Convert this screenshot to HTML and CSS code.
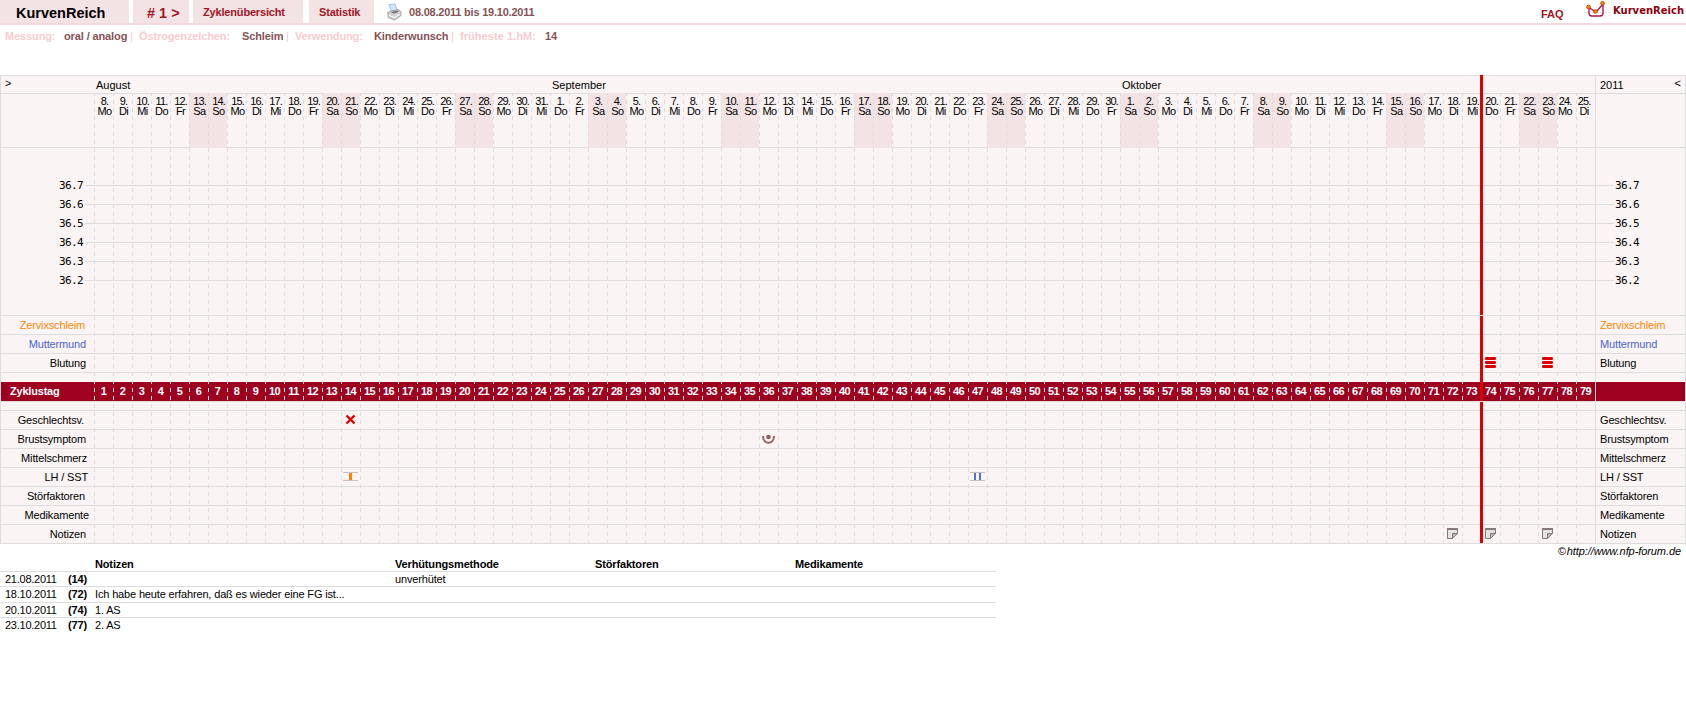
FILE: index.html
```html
<!DOCTYPE html>
<html lang="de">
<head>
    <meta charset="UTF-8">
    <title>KurvenReich - Zyklus 1</title>
    <link rel="stylesheet" href="styles.css">
</head>
<body>
    <header class="topbar">
        <div class="tab tab-title"><span>KurvenReich</span></div>
        <a class="tab tab-cycle"><span># 1 &gt;</span></a>
        <a class="tab tab-overview"><span>Zyklenübersicht</span></a>
        <a class="tab tab-stats"><span>Statistik</span></a>
        <svg class="printer" width="16" height="18" viewBox="0 0 16 18">
            <path d="M2 1.500l6-.5 2.500 7-6 1z" fill="#d4e6fb" stroke="#8fb4e0" stroke-width=".8"/>
            <path d="M.7 9.500l3.300-1.500 7-1.500 3 2v4l-6.500 4.500-6.300-2.500z" fill="#d2d2d2" stroke="#888" stroke-width=".7"/>
            <path d="M4 9l6-1.500 2 1.200-5.500 2z" fill="#777"/>
            <path d="M2 12.500l5.500 2 5.500-3.500" fill="none" stroke="#fff"/>
        </svg>
        <span class="period">08.08.2011 bis 19.10.2011</span>
        <a class="faq">FAQ</a>
        <svg class="logo" width="28" height="20" viewBox="0 0 28 20">
            <path d="M0 12.500h28M6.500 15v4M12.500 15v4M18.500 15v4" stroke="#e4e4e4" stroke-dasharray="3 1"/>
            <path d="M5 7v6q0 3 3 3h8q3 0 3-3V4l-7 8-8-5" fill="none" stroke="#b01848" stroke-width="1.400"/>
            <circle cx="4.500" cy="7" r="1.800" fill="#ff9000" stroke="#c04010"/>
            <circle cx="11.500" cy="11.500" r="1.800" fill="#ff9000" stroke="#c04010"/>
            <circle cx="18.500" cy="3.300" r="1.800" fill="#ff9000" stroke="#c04010"/>
        </svg>
        <span class="brand">KurvenReich</span>
    </header>

    <div class="settings">
        <span>Messung:</span><b>oral / analog</b><i>|</i>
        <span>Östrogenzeichen:</span><b>Schleim</b><i>|</i>
        <span>Verwendung:</span><b>Kinderwunsch</b><i>|</i>
        <span class="wide">früheste 1.hM:</span><b>14</b>
    </div>

    <main class="chart" id="chart">
        <div class="row months">
            <div class="left">&gt;</div>
            <div class="days">
                <span class="month-aug">August</span>
                <span class="month-sep">September</span>
                <span class="month-okt">Oktober</span>
            </div>
            <div class="right"><span>2011</span><span class="next">&lt;</span></div>
        </div>
        <div class="row dates">
            <div class="left"></div>
            <div class="days" id="dates"></div>
            <div class="right"></div>
        </div>
        <div class="row temps" id="temps"></div>
        <div id="rows-top"></div>
        <div class="row gap"><div class="left"></div><div class="days"></div><div class="right"></div></div>
        <div class="row cycle">
            <div class="left">Zyklustag</div>
            <div class="days" id="cycle-days"></div>
            <div class="right"></div>
        </div>
        <div class="row gap lined"><div class="left"></div><div class="days"></div><div class="right"></div></div>
        <div id="rows-bottom"></div>
        <div class="dashes"></div>
        <div class="today"></div>
    </main>

    <div class="copyright">© http://www.nfp-forum.de</div>

    <div class="notes">
        <div class="note head"><span></span><span></span><b>Notizen</b><b>Verhütungsmethode</b><b>Störfaktoren</b><b>Medikamente</b></div>
        <div class="note"><span class="day">21.08.2011</span><b>(14)</b><span></span><span>unverhütet</span></div>
        <div class="note tall"><span class="day">18.10.2011</span><b>(72)</b><span>Ich habe heute erfahren, daß es wieder eine FG ist...</span></div>
        <div class="note"><span class="day">20.10.2011</span><b>(74)</b><span>1. AS</span></div>
        <div class="note last"><span class="day">23.10.2011</span><b>(77)</b><span>2. AS</span></div>
    </div>

    <script>
        const DAYS = 79;
        const names = ["So", "Mo", "Di", "Mi", "Do", "Fr", "Sa"];

        const icons = {
            cross: '<path d="M5.500 4.500l8 8M13.500 4.500l-8 8" stroke="#d00" stroke-width="2.400"/>',
            breast: '<path d="M4 6c0 9 11 9 11 0" fill="none" stroke="#966060" stroke-width="2"/><circle cx="9.500" cy="7" r="2.300" fill="#966060"/>',
            lhOne: '<path d="M2 4.500h15M2 12.500h15" stroke="#c9c0c4"/><path d="M8 5h3v7h-3z" fill="#ff8000"/>',
            lhTwo: '<path d="M2 4.500h15M2 12.500h15" stroke="#c9c0c4"/><path d="M6 5h2v7h-2zM11 5h2v7h-2z" fill="#5870d0"/>',
            blood: '<g fill="#d00"><rect x="4" y="3" width="11" height="3" rx="1.200"/><rect x="4" y="7" width="11" height="3" rx="1.200"/><rect x="4" y="11" width="11" height="3" rx="1.200"/></g>',
            note: '<path d="M4.500 3.500h10v5l-5 5h-5z" fill="#e2e4e2" stroke="#857979"/><path d="M4 4h11" stroke="#857979" stroke-width="2"/><path d="M9.500 13.500v-5h5z" fill="#bbb" stroke="#857979"/>'
        };

        // end = free space between the label and the first day column
        const topRows = [
            { label: "Zervixschleim", end: 9, css: "mucus" },
            { label: "Muttermund", end: 8, css: "cervix" },
            { label: "Blutung", end: 8, marks: { 74: "blood", 77: "blood" } }
        ];
        const bottomRows = [
            { label: "Geschlechtsv.", end: 10, marks: { 14: "cross" } },
            { label: "Brustsymptom", end: 8, marks: { 36: "breast" } },
            { label: "Mittelschmerz", end: 7 },
            { label: "LH / SST", end: 6, marks: { 14: "lhOne", 47: "lhTwo" } },
            { label: "Störfaktoren", end: 9 },
            { label: "Medikamente", end: 5 },
            { label: "Notizen", end: 8, marks: { 72: "note", 74: "note", 77: "note" } }
        ];

        function renderRow(row) {
            let marks = "";
            for (const day in row.marks || {}) {
                marks += `<svg style="grid-column: ${day}" width="19" height="18" viewBox="0 0 19 18">${icons[row.marks[day]]}</svg>`;
            }
            return `<div class="row entry ${row.css || ""}">
                <div class="left" style="padding-right: ${row.end}px">${row.label}</div>
                <div class="days">${marks}</div>
                <div class="right">${row.label}</div>
            </div>`;
        }

        let dates = "";
        let numbers = "";
        for (let i = 0; i < DAYS; i++) {
            const d = new Date(2011, 7, 8 + i);
            const weekend = d.getDay() === 0 || d.getDay() === 6;
            const css = (weekend ? " weekend" : "") + (i > 76 ? " tight" : "");
            dates += `<div class="date${css}"><span>${d.getDate()}.</span><span class="name">${names[d.getDay()]}</span></div>`;
            numbers += `<span>${i + 1}</span>`;
        }
        document.getElementById("dates").innerHTML = dates;
        document.getElementById("cycle-days").innerHTML = numbers;

        let temps = "";
        ["36.7", "36.6", "36.5", "36.4", "36.3", "36.2"].forEach(t => {
            temps += `<div class="temp"><span>${t}</span><hr><span>${t}</span></div>`;
        });
        document.getElementById("temps").innerHTML = temps;
        document.getElementById("rows-top").innerHTML = topRows.map(renderRow).join("");
        document.getElementById("rows-bottom").innerHTML = bottomRows.map(renderRow).join("");
    </script>
</body>
</html>
```
FILE: styles.css
```css
* {
    box-sizing: border-box;
}
body {
    margin: 0;
    font: 11px/13px "Liberation Sans", Arial, sans-serif;
    color: #000;
    background: #fff;
    overflow: hidden;
}
.topbar {
    display: flex;
    height: 25px;
    border-bottom: 2px solid #f2d9db;
    font-weight: bold;
    color: #a01625;
    white-space: nowrap;
}
.tab {
    height: 23px;
    margin-right: 4px;
    background: #f4e3e5;
    padding-top: 6px;
    letter-spacing: -0.17px;
}
.tab-title {
    width: 129px;
    padding-left: 16px;
    padding-top: 7px;
    font-size: 14.5px;
    letter-spacing: 0;
    color: #000;
}
.tab-cycle {
    width: 56px;
    padding-left: 14px;
    padding-top: 7px;
    font-size: 14.5px;
    letter-spacing: 0;
}
.tab-overview {
    width: 110px;
    padding-left: 10px;
    margin-right: 6px;
}
.tab-stats {
    width: 65px;
    padding-left: 10px;
    margin-right: 13px;
}
.printer {
    margin-top: 3px;
}
.period {
    margin: 6px 0 0 6px;
    color: #855355;
    letter-spacing: -0.22px;
}
.faq {
    margin: 8px 0 0 auto;
    width: 43px;
}
.logo {
    flex: none;
}
.brand {
    width: 74px;
    padding: 4px 0 0 1px;
    font: bold 10px/13px "DejaVu Sans", Verdana, sans-serif;
    color: #900010;
}
.settings {
    display: grid;
    grid-template-columns: 59px 67px 8px 103px 45px 8px 79px 78px 8px 85px 30px;
    height: 50px;
    padding: 5px 0 0 5px;
    font-weight: bold;
    color: #f8cccf;
    white-space: nowrap;
    letter-spacing: -0.12px;
}
.settings .wide {
    letter-spacing: 0.05px;
}
.settings b {
    color: #855355;
}
.settings i {
    margin-left: -1px;
    font-style: normal;
    font-weight: normal;
}

/* chart */
.chart {
    position: relative;
    width: 1686px;
    height: 469px;
    border: 1px solid #ddd;
    border-bottom: 0;
    background: #faf4f4;
}
.row {
    display: grid;
    grid-template-columns: 93px 1501px 90px;
    height: 19px;
    border-bottom: 1px solid #ddd;
}
.days {
    display: grid;
    grid-template-columns: repeat(79, 19px);
}
.right {
    border-left: 1px solid #ddd;
    padding-left: 4px;
}
.months {
    height: 18px;
    line-height: 19px;
}
.months .left {
    padding-left: 4px;
    line-height: 15px;
}
.months .right {
    display: flex;
    justify-content: space-between;
    padding-right: 4px;
}
.months .next {
    line-height: 15px;
}
.months .days span {
    padding-left: 2px;
}
.month-aug {
    grid-column: 1 / span 24;
}
.month-sep {
    grid-column: 25 / span 30;
}
.month-okt {
    grid-column: 55 / span 25;
}
.dates {
    height: 54px;
}
.date {
    display: flex;
    flex-direction: column;
    align-items: center;
    margin: -1px 0;
    padding: 3px 0 0 2px;
    line-height: 10px;
    letter-spacing: -0.9px;
}
.date .name {
    letter-spacing: -0.6px;
}
.date.tight {
    padding-left: 0;
    padding-right: 3px;
}
.weekend {
    background: #f4e3e5;
}
.temps {
    display: block;
    height: 168px;
    padding-top: 28px;
    background: linear-gradient(#ddd, #ddd) 1594px 0 / 1px 100% no-repeat;
}
.temp {
    display: flex;
    align-items: center;
    height: 19px;
    padding-left: 58px;
    font: 11px/19px "DejaVu Sans Mono", monospace;
    letter-spacing: -0.62px;
}
.temp hr {
    width: 1529px;
    height: 1px;
    margin: 0 1px 0 2px;
    border: 0;
    background: #ddd;
}
.temp span {
    width: 24px;
}
.entry {
    line-height: 18px;
    letter-spacing: -0.15px;
}
.entry .left {
    text-align: right;
}
.mucus {
    color: #f88808;
}
.cervix {
    color: #4c64d0;
}
.gap {
    height: 9px;
    border-bottom: 0;
}
.gap.lined {
    border-bottom: 1px solid #ddd;
}
.cycle {
    height: 20px;
    background: #9e0020;
    color: #fff;
    font-weight: bold;
    line-height: 19px;
}
.cycle .left {
    padding-left: 9px;
    letter-spacing: -0.2px;
}
.cycle .days {
    text-align: center;
    letter-spacing: -0.6px;
}
.dashes {
    position: absolute;
    left: 93px;
    top: 17px;
    width: 1501px;
    height: 450px;
    background: repeating-linear-gradient(to right, #ddd 0 1px, transparent 1px 19px);
    -webkit-mask-image: repeating-linear-gradient(to bottom, #000 0 3px, transparent 3px 7px, #000 7px 8px);
    mask-image: repeating-linear-gradient(to bottom, #000 0 3px, transparent 3px 7px, #000 7px 8px);
}
.today {
    position: absolute;
    left: 1479px;
    top: -1px;
    width: 3px;
    height: 468px;
    background: linear-gradient(#d00 240px, #ddd 240px 241px, #d00 241px 326px, #ddd 326px 327px, #d00 327px);
}
.copyright {
    padding-right: 5px;
    height: 12px;
    line-height: 14px;
    font-style: italic;
    text-align: right;
    word-spacing: -2px;
    letter-spacing: -0.08px;
}

/* notes below the chart */
.notes {
    width: 996px;
    margin-top: 1px;
    letter-spacing: -0.15px;
}
.note {
    display: grid;
    grid-template-columns: 63px 27px 300px 200px 200px 201px;
    height: 15px;
    padding-left: 5px;
    border-bottom: 1px solid #ddd;
    line-height: 15px;
    white-space: nowrap;
}
.note .day {
    letter-spacing: -0.25px;
}
.note.tall {
    height: 16px;
}
.note.last {
    border-bottom: 0;
}
```
